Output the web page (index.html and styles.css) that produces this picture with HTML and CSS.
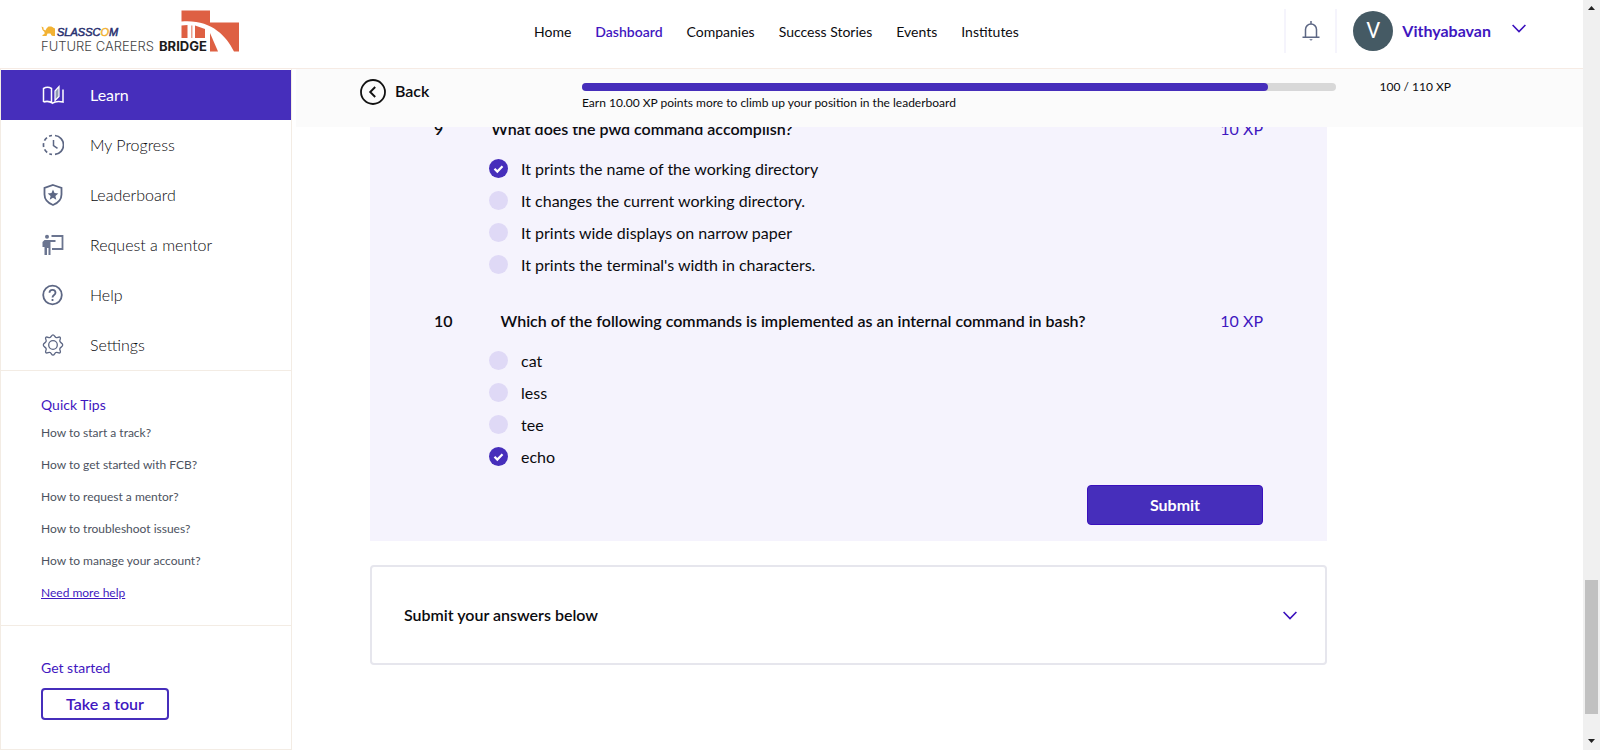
FILE: index.html
```html
<!DOCTYPE html>
<html lang="en">
<head>
<meta charset="utf-8">
<title>Future Careers Bridge</title>
<link rel="stylesheet" href="styles.css">
</head>
<body>
<div class="shell">
  <div class="page">
    <header class="topbar">
      <a class="logo" href="#" aria-label="Slasscom Future Careers Bridge">
        <svg width="200" height="44" viewBox="40 9 200 44">
          <g fill="#de6043">
            <path d="M181.500 10.500H210V22.500H239V51.500H234C226 35 210 19 181.500 21.500Z"/>
            <path d="M181.500 25.500L187.500 25V38H181.500Z"/>
            <path d="M195 25.500L205 29V38H195Z"/>
            <path d="M210 33L218 51.500H210Z"/>
            <path d="M191 25.500h1.500V38H191Z" opacity=".6"/>
          </g>
          <g fill="#f2b233">
            <path d="M41.500 26.500l2 1v2l2 1 1-2 2-2 3 0 2 2v4l1 3h-3l-1-2-3 0-1 2.500h-4v-1l2-1v-2l-2-2z"/>
            <path d="M48 27h4l3 1.500v7.500h-2.500l-2-4-3 0z"/>
          </g>
          <text class="logo-brand" x="57" y="35.500">SLASSC<tspan class="logo-sun">O</tspan>M</text>
          <text class="logo-name" x="41" y="51">FUTURE CAREERS</text>
          <text class="logo-bold" x="159" y="51">BRIDGE</text>
        </svg>
      </a>
      <nav class="mainnav">
        <a href="#">Home</a>
        <a href="#" class="active">Dashboard</a>
        <a href="#">Companies</a>
        <a href="#">Success Stories</a>
        <a href="#">Events</a>
        <a href="#">Institutes</a>
      </nav>
      <button class="bell" aria-label="Notifications">
        <svg width="18" height="20" viewBox="0 0 18 20" fill="none" stroke="#5d6784" stroke-width="1.500">
          <path d="M3.500 16V8.500a5.500 5.500 0 0 1 11 0V16M.5 16.200h17M9 0v3"/>
          <path d="M7.200 18.200h3.600L9 19.800z" fill="#5d6784" stroke="none"/>
        </svg>
      </button>
      <button class="user">
        <span class="avatar">V</span>
        <span class="username">Vithyabavan</span>
        <svg class="caret" width="14" height="9" viewBox="0 0 14 9" fill="none" stroke="#3a10bd" stroke-width="1.600"><path d="M.6 1L7 7.500 13.400 1"/></svg>
      </button>
    </header>

    <div class="columns">
      <aside class="sidebar">
        <nav class="menu">
          <a href="#" class="current">
            <svg width="22" height="22" viewBox="0 0 22 22" fill="none" stroke="#fff" stroke-width="1.500"><path d="M1.500 18V4.500c2.500-1.500 5.500-1.500 8 0V18M1.500 18c3-1 6-1 9 1.200 3-2.200 6.500-2.200 10.500-1.200V5.500"/><path d="M13 7L17 2.500v10L13 16.500z" fill="#8f9bb3" stroke-width="1.200"/></svg>
            <span>Learn</span></a>
          <a href="#">
            <svg width="22" height="22" viewBox="0 0 22 22" fill="none" stroke="#5d6784" stroke-width="1.700"><path d="M13 1.500a9.500 9.500 0 0 1 0 18.900"/><path d="M10 1.500a9.500 9.500 0 0 0 0 18.900" stroke-dasharray="4 2.500" stroke-dashoffset="1"/><path d="M11.500 6v5.500l4 2.800" stroke-width="1.500"/></svg>
            <span>My Progress</span></a>
          <a href="#">
            <svg width="22" height="22" viewBox="0 0 22 22"><path d="M11 1l8.500 3v6.500c0 5-3.500 8.500-8.500 10.500-5-2-8.500-5.500-8.500-10.500V4z" fill="none" stroke="#5d6784" stroke-width="1.800"/><path d="M11 5.500l1.500 3.600 3.800.3-2.900 2.500.9 3.800-3.300-2-3.300 2 .9-3.800-2.900-2.500 3.800-.3z" fill="#5d6784"/></svg>
            <span>Leaderboard</span></a>
          <a href="#">
            <svg width="22" height="22" viewBox="0 0 22 22" fill="#6b7590"><circle cx="5" cy="2.800" r="2"/><path d="M2.500 6H13.500V8H8.500V21H6.500V14H5V21H2.500V13H.500V8z"/><path d="M9.500 2H20.500V15H10" fill="none" stroke="#6b7590" stroke-width="1.800"/></svg>
            <span>Request a mentor</span></a>
          <a href="#">
            <svg width="22" height="22" viewBox="0 0 22 22" fill="none" stroke="#5d6784" stroke-width="1.800"><circle cx="10.500" cy="11" r="9.300"/><path d="M7.500 8.800c0-4 6-4 6 0 0 2.300-3 2.200-3 4.700M10.500 15v2"/></svg>
            <span>Help</span></a>
          <a href="#">
            <svg width="22" height="22" viewBox="0 0 22 22" fill="none" stroke="#5d6784" stroke-width="1.300"><circle cx="11" cy="11" r="4.300"/><path d="M11 .8c1.600 0 1.600 2.600 3.200 2.900 1.400.3 2.700-1.500 3.900-.4 1.200 1.200-.6 2.600-.3 3.900.3 1.600 2.900 1.900 2.900 3.800s-2.600 2.200-2.900 3.800c-.3 1.300 1.500 2.700.3 3.900-1.200 1.100-2.500-.7-3.900-.4-1.600.3-1.600 2.900-3.200 2.900s-1.600-2.600-3.200-2.900c-1.400-.3-2.700 1.500-3.900.4-1.200-1.200.6-2.600.3-3.900C3.900 13.200 1.300 12.900 1.300 11s2.600-2.200 2.900-3.800c.3-1.300-1.500-2.700-.3-3.900 1.200-1.100 2.500.7 3.900.4C9.400 3.400 9.400.8 11 .8z"/></svg>
            <span>Settings</span></a>
        </nav>
        <section class="tips">
          <h2>Quick Tips</h2>
          <a href="#">How to start a track?</a>
          <a href="#">How to get started with FCB?</a>
          <a href="#">How to request a mentor?</a>
          <a href="#">How to troubleshoot issues?</a>
          <a href="#">How to manage your account?</a>
          <a href="#" class="more">Need more help</a>
        </section>
        <section class="start">
          <h2>Get started</h2>
          <button class="tour">Take a tour</button>
        </section>
      </aside>

      <main class="content">
        <div class="levelbar">
          <button class="back">
            <svg width="26" height="26" viewBox="0 0 26 26" fill="none" stroke="#111"><circle cx="13" cy="13" r="12" stroke-width="1.800"/><path d="M15.200 8L10.200 13l5 5" stroke-width="1.900"/></svg>
            <span>Back</span>
          </button>
          <div class="level">
            <div class="track"><div class="fill" style="width:91%"></div></div>
            <p>Earn 10.00 XP points more to climb up your position in the leaderboard</p>
          </div>
          <span class="xp">100 / 110 XP</span>
        </div>

        <div class="scroller">
          <form class="quiz">
            <div class="question">
              <span>9</span><h3>What does the pwd command accomplish?</h3><span class="points">10 XP</span>
            </div>
            <div class="options">
              <label><input type="radio" name="q9" checked>It prints the name of the working directory</label>
              <label><input type="radio" name="q9">It changes the current working directory.</label>
              <label><input type="radio" name="q9">It prints wide displays on narrow paper</label>
              <label><input type="radio" name="q9">It prints the terminal's width in characters.</label>
            </div>
            <div class="question">
              <span>10</span><h3>Which of the following commands is implemented as an internal command in bash?</h3><span class="points">10 XP</span>
            </div>
            <div class="options">
              <label><input type="radio" name="q10">cat</label>
              <label><input type="radio" name="q10">less</label>
              <label><input type="radio" name="q10">tee</label>
              <label><input type="radio" name="q10" checked>echo</label>
            </div>
            <button type="button" class="submit">Submit</button>
          </form>
          <button class="accordion">
            <span>Submit your answers below</span>
            <svg width="14" height="9" viewBox="0 0 14 9" fill="none" stroke="#3a10bd" stroke-width="1.600"><path d="M.6 1L7 7.500 13.400 1"/></svg>
          </button>
        </div>
      </main>
    </div>
  </div>
  <div class="scrollbar">
    <svg width="17" height="17" viewBox="0 0 17 17"><path d="M5 10h7L8.500 6z" fill="#222"/></svg>
    <div class="rail"><div class="thumb"></div></div>
    <svg width="17" height="17" viewBox="0 0 17 17"><path d="M5 6h7l-3.500 4z" fill="#222"/></svg>
  </div>
</div>
</body>
</html>
```
FILE: styles.css
```css
* { box-sizing: border-box; }
body {
  margin: 0;
  font-family: Lato, "Liberation Sans", sans-serif;
  font-size: 16px;
  color: #0b0b0f;
  background: #fff;
}
a { color: inherit; text-decoration: none; }
button {
  font: inherit;
  color: inherit;
  background: none;
  border: 0;
  padding: 0;
  cursor: pointer;
}
h2, h3, p { margin: 0; }

.shell { display: flex; height: 100vh; overflow: hidden; }
.page { flex: 1; display: flex; flex-direction: column; min-width: 0; }

.topbar {
  display: flex;
  align-items: flex-start;
  height: 69px;
  padding: 9px 57px 0 40px;
  border-bottom: 1px solid #f6ebe4;
}
.logo { width: 200px; height: 44px; }
.logo svg { display: block; }
.logo-brand { font: italic 400 11px "Liberation Sans", sans-serif; fill: #29306f; stroke: #29306f; stroke-width: .5px; }
.logo-sun { fill: #f2b233; stroke: #f2b233; }
.logo-name { font: 300 13px Inter, sans-serif; fill: #444; }
.logo-bold { font: 700 13px Inter, sans-serif; fill: #1c1c1c; }
.mainnav {
  flex: 1;
  display: flex;
  gap: 24px;
  margin-left: 294px;
  font-size: 14px;
  line-height: 46px;
}
.mainnav .active { color: #3f17c0; font-weight: 600; }
.bell {
  display: flex;
  align-items: center;
  justify-content: center;
  width: 53px;
  height: 44px;
  border: solid #f5f4fc;
  border-width: 0 2px;
}
.user { display: flex; align-items: center; margin-left: 16px; }
.avatar {
  width: 40px;
  height: 40px;
  margin-top: 2px;
  border-radius: 50%;
  background: #455a64;
  color: #fff;
  font-family: Roboto, sans-serif;
  font-size: 22px;
  line-height: 40px;
}
.username { margin: 0 21px 0 9px; font-weight: 700; color: #3f17c0; }
.caret { margin-bottom: 4px; }

.columns { flex: 1; display: flex; min-height: 0; }
.sidebar {
  flex: none;
  display: flex;
  flex-direction: column;
  width: 292px;
  padding-top: 1px;
  border: solid #f3ece4;
  border-width: 0 1px 1px;
}
.menu a {
  display: flex;
  align-items: center;
  gap: 26px;
  height: 50px;
  padding-left: 41px;
  color: #08080c;
  font-weight: 300;
}
.menu span, .accordion span { padding-bottom: 2px; }
.menu .current { background: #462ebb; color: #fff; font-weight: 400; }
.tips, .start {
  display: flex;
  flex-direction: column;
  align-items: flex-start;
  padding: 24px 40px;
  border-top: 1px solid #f3ece4;
}
.tips { padding-bottom: 16px; }
.tips h2, .start h2 { font-size: 14px; font-weight: 400; line-height: 20px; color: #3f17c0; }
.tips a { font-size: 12px; line-height: 32px; color: #4c5260; }
.tips h2 { margin-bottom: 2px; }
.tips .more { color: #3f17c0; text-decoration: underline; }
.start { flex: 1; padding-top: 32px; }
.tour {
  width: 128px;
  height: 32px;
  margin-top: 10px;
  border: 2px solid #462ebb;
  border-radius: 4px;
  color: #3f17c0;
  line-height: 28px;
  font-weight: 600;
}

.content { flex: 1; display: flex; flex-direction: column; min-width: 0; }
.levelbar {
  flex: none;
  display: flex;
  align-items: flex-start;
  height: 58px;
  margin-left: 4px;
  padding: 10px 132px 0 64px;
  background: #fbfbfb;
}
.back {
  display: flex;
  align-items: center;
  gap: 9px;
  width: 222px;
  font-weight: 600;
}
.back span { padding-bottom: 4px; }
.level { flex: 1; margin: 4px 44px 0 0; }
.track { height: 8px; border-radius: 4px; background: #d8d8d8; }
.fill { height: 8px; border-radius: 4px; background: #462ebb; }
.level p { font-size: 12px; line-height: 16px; margin-top: 4px; }
.xp { font-size: 12px; line-height: 16px; }

.scroller { flex: 1; min-height: 0; overflow: hidden; padding: 0 256px 0 78px; }
.quiz {
  display: flex;
  flex-direction: column;
  margin-top: -8px;
  padding: 0 64px 16px;
  background: #f5f3fd;
}
.question { display: flex; gap: 48px; line-height: 20px; font-weight: 600; }
.question h3 { flex: 1; font-size: 16px; font-weight: 600; }
.points { font-weight: 400; color: #3f17c0; }
.options { padding: 13px 0 31px 55px; }
.options:last-of-type { padding-bottom: 13px; }
.options label { display: flex; align-items: center; gap: 13px; height: 32px; }
.options input {
  appearance: none;
  width: 19px;
  height: 19px;
  margin: 0;
  border-radius: 50%;
  background: #dfd9f6;
}
.options input:checked {
  background: #462ebb url("data:image/svg+xml,%3Csvg xmlns='http://www.w3.org/2000/svg' viewBox='0 0 19 19'%3E%3Cpath d='M5.500 9.800l2.800 2.800 5.200-5.400' fill='none' stroke='white' stroke-width='2.200'/%3E%3C/svg%3E");
}
.submit {
  align-self: flex-end;
  width: 176px;
  height: 40px;
  padding-bottom: 2px;
  border: 1px solid #3a10bd;
  border-radius: 4px;
  background: #462ebb;
  color: #fff;
  font-weight: 700;
}
.accordion {
  display: flex;
  align-items: center;
  justify-content: space-between;
  width: 100%;
  height: 100px;
  margin-top: 24px;
  padding: 0 28px 0 32px;
  border: 2px solid #e6e6ed;
  border-radius: 4px;
  font-weight: 600;
}

.scrollbar {
  flex: none;
  display: flex;
  flex-direction: column;
  width: 17px;
  background: #f0f0f0;
}
.rail { flex: 1; display: flex; flex-direction: column; justify-content: flex-end; padding: 0 2px 19px; }
.thumb { height: 134px; background: #c1c1c1; }
```
